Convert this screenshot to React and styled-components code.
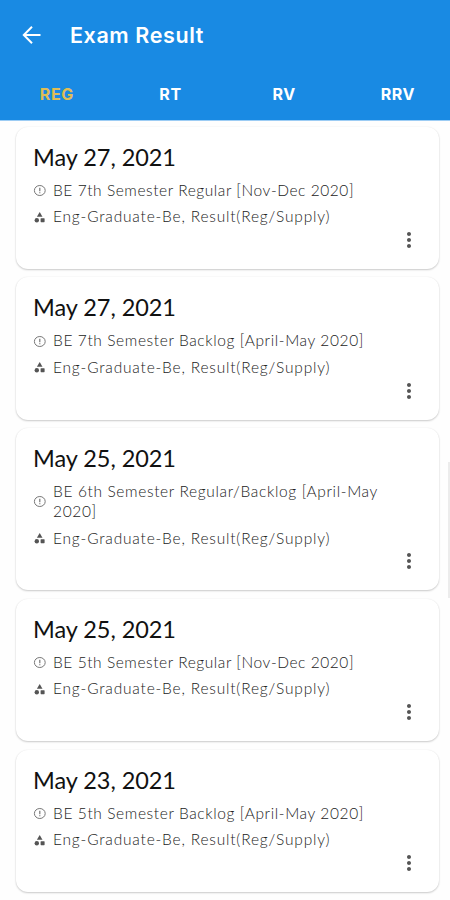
import React from 'react'
import styled, { createGlobalStyle } from 'styled-components'
import { MdMoreVert } from 'react-icons/md'

const GlobalStyle = createGlobalStyle`
  * {
    box-sizing: border-box;
  }

  body {
    margin: 0;
    background-color: #fefefe;
    font-family: Lato, 'Open Sans', sans-serif;
  }
`

const Screen = styled.div`
  position: relative;
  width: 450px;
  height: 900px;
  overflow: hidden;
`

const Header = styled.header`
  height: 121px;
  background-color: #198ae3;
  border-bottom: 1px solid #9cccf4;
  color: #fff;
  font-family: Inter, sans-serif;
`

const TitleBar = styled.div`
  display: flex;
  align-items: center;
  height: 70px;
  padding-left: 22px;
`

const BackButton = styled.button`
  display: flex;
  width: 20px;
  padding: 0;
  margin-right: 28px;
  background: none;
  border: none;
  color: #fff;
  cursor: pointer;
`

const Heading = styled.h1`
  margin: 0;
  font-size: 21.5px;
  font-weight: 600;
  letter-spacing: 0.6px;
`

const Tabs = styled.nav`
  display: grid;
  grid-template-columns: repeat(4, 113.7px);
  height: 47px;
`

const Tab = styled.button`
  padding: 0;
  background: none;
  border: none;
  color: ${({ $active }) => ($active ? '#dfbd55' : '#fff')};
  font-family: inherit;
  font-size: 16px;
  font-weight: 700;
  letter-spacing: 0.6px;
  cursor: pointer;
`

const ResultList = styled.main`
  display: flex;
  flex-direction: column;
  gap: 8.7px;
  padding: 5.5px 11px 0 16px;
`

const Card = styled.article`
  display: flex;
  flex-direction: column;
  padding: 15px 17px 16.6px;
  background-color: #fff;
  border-radius: 12px;
  box-shadow: 0 1px 2px rgba(0, 0, 0, 0.2), 0 0 2px rgba(0, 0, 0, 0.06);
`

const CardDate = styled.h2`
  margin: 0 0 9px;
  color: #111;
  font-size: 23.5px;
  font-weight: 400;
  line-height: 30px;
  letter-spacing: -0.05px;
`

const Detail = styled.div`
  display: grid;
  grid-template-columns: 13px 1fr;
  column-gap: 7px;
  align-items: center;
  margin-bottom: 7.3px;
  color: #222;
`

const DetailText = styled.span`
  font-size: 15.5px;
  font-weight: 300;
  line-height: 19.5px;
  letter-spacing: ${({ $spacing }) => $spacing}px;
  white-space: pre;
`

const MoreButton = styled.button`
  display: flex;
  align-self: flex-end;
  width: 24px;
  height: 24px;
  margin: -6px 1px 0 0;
  padding: 0;
  background: none;
  border: none;
  color: #555;
  font-size: 24px;
  cursor: pointer;
`

const ScrollThumb = styled.div`
  position: absolute;
  top: 462px;
  right: 0;
  width: 2px;
  height: 136px;
  background-color: #ececec;
`

const BackIcon = () => (
  <svg width="20" height="20" viewBox="0 0 20 20" fill="none" stroke="currentColor" strokeWidth="2">
    <path d="M18.5 10H2M10 1.8L1.8 10L10 18.2" />
  </svg>
)

const NoticeIcon = () => (
  <svg width="13" height="13" viewBox="0 0 13 13" fill="none" stroke="#777">
    <ellipse cx="6.8" cy="6.5" rx="5.4" ry="5" />
    <path d="M6.8 3.7V7.2M6.8 8.2V9.3" strokeWidth="1.2" />
  </svg>
)

const CategoryIcon = () => (
  <svg width="13" height="13" viewBox="0 0 13 13" fill="#555">
    <path d="M6.7 1L9.5 5.8H3.9Z" />
    <circle cx="3.8" cy="9.2" r="2.2" />
    <rect x="7.6" y="7.2" width="4" height="4" rx="0.6" />
  </svg>
)

const tabs = ['REG', 'RT', 'RV', 'RRV']

const results = [
  { date: 'May 27, 2021', exam: 'BE 7th Semester Regular [Nov-Dec 2020]', spacing: 0.56 },
  { date: 'May 27, 2021', exam: 'BE 7th Semester Backlog [April-May 2020]', spacing: 0.61 },
  { date: 'May 25, 2021', exam: 'BE 6th Semester Regular/Backlog [April-May\n2020]', spacing: 0.64 },
  { date: 'May 25, 2021', exam: 'BE 5th Semester Regular [Nov-Dec 2020]', spacing: 0.56 },
  { date: 'May 23, 2021', exam: 'BE 5th Semester Backlog [April-May 2020]', spacing: 0.61 },
]

const App = () => {
  return (
    <Screen>
      <GlobalStyle />
      <Header>
        <TitleBar>
          <BackButton aria-label="Back"><BackIcon /></BackButton>
          <Heading>Exam Result</Heading>
        </TitleBar>
        <Tabs>
          {tabs.map((tab) => (
            <Tab key={tab} $active={tab === 'REG'}>{tab}</Tab>
          ))}
        </Tabs>
      </Header>

      <ResultList>
        {
          results.map((result, index) => (
            <Card key={index}>
              <CardDate>{result.date}</CardDate>
              <Detail>
                <NoticeIcon />
                <DetailText $spacing={result.spacing}>{result.exam}</DetailText>
              </Detail>
              <Detail>
                <CategoryIcon />
                <DetailText $spacing={0.81}>Eng-Graduate-Be, Result(Reg/Supply)</DetailText>
              </Detail>
              <MoreButton aria-label="More options"><MdMoreVert /></MoreButton>
            </Card>
          ))
        }
      </ResultList>
      <ScrollThumb />
    </Screen>
  )
}

export default App;
